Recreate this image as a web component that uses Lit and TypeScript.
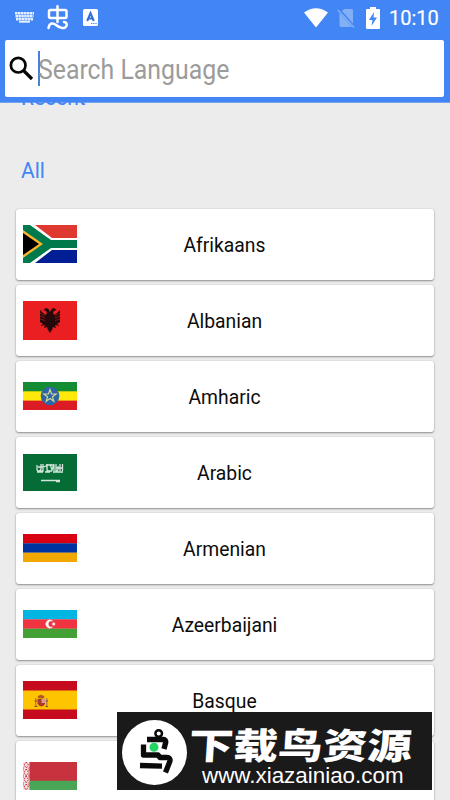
import { LitElement, html, svg, css } from "lit";
import { customElement, property } from "lit/decorators.js";

const star = (cx: number, cy: number, r: number, inner: number, n: number) => {
  const pts: string[] = [];
  for (let i = 0; i < n * 2; i++) {
    const a = (Math.PI * i) / n - Math.PI / 2;
    const q = i % 2 ? inner : r;
    pts.push(`${(cx + q * Math.cos(a)).toFixed(2)},${(cy + q * Math.sin(a)).toFixed(2)}`);
  }
  return pts.join(" ");
};

const flags: Record<string, { h: number; art: unknown }> = {
  za: {
    h: 38,
    art: svg`<rect width="54" height="38" fill="#fff"/>
      <path d="M12 0H54V13H29Z" fill="#de3831"/><path d="M12 38H54V25H29Z" fill="#001f95"/>
      <path d="M0 0H7L28 15H54V23H28L7 38H0Z" fill="#007a4d"/>
      <path d="M0 5L20 19L0 33Z" fill="#fcb52a"/><path d="M0 8L16 19L0 30Z" fill="#000"/>`,
  },
  al: {
    h: 39,
    art: svg`<rect width="54" height="39" fill="#e91f22"/>
      <path d="M27 11L25.5 8L23 7L20.5 9L23 10L24 12L22.500 14L20 12L17 9V21L20 23L17.500 25L22 24L21 27L24 26L25 29L27 32L29 29L30 26L33 27L32 24L36.500 25L34 23L37 21V9L34 12L31.500 14L30 12L31 10L33.500 9L31 7L28.500 8Z" fill="#25090a"/>
      <path d="M17 12L22 15M17 15L22 17M17 18L22 19.500M37 12L32 15M37 15L32 17M37 18L32 19.500" stroke="#a5181b" stroke-width=".7"/>`,
  },
  et: {
    h: 28,
    art: svg`<rect width="54" height="28" fill="#ffe90b"/><rect width="54" height="9.300" fill="#148c33"/>
      <rect y="18.600" width="54" height="9.400" fill="#dc1c25"/><circle cx="27" cy="14" r="9.300" fill="#2d65a9"/>
      <polygon points=${star(27, 14, 6.5, 2.6, 5)} fill="none" stroke="#d5d890" stroke-width="1.200"/>`,
  },
  sa: {
    h: 37,
    art: svg`<rect width="54" height="37" fill="#056c35"/>
      <path d="M14 11V16Q16 19 18 15V10M20 10V17H15M21 13Q25 10 24 17M24 10V17H29M27 10L29 16L31 10M31 17V11M33 10V17Q36 17 35 12M37 10V17M39.500 10V17M14 18H20M22 18H27M30 18H40M33 14H40M15 13H20M23 11H30" fill="none" stroke="#d4e6db" stroke-width="1.300"/>
      <path d="M18 26.500H37M33 27.500H37" stroke="#d4e6db" stroke-width="1.300"/>`,
  },
  am: {
    h: 28,
    art: svg`<rect width="54" height="9.500" fill="#d90012"/><rect y="9.300" width="54" height="9.500" fill="#0033a0"/><rect y="18.700" width="54" height="9.300" fill="#f2a800"/>`,
  },
  az: {
    h: 28,
    art: svg`<rect width="54" height="9.500" fill="#00b5e2"/><rect y="9.300" width="54" height="9.500" fill="#ef3340"/><rect y="18.700" width="54" height="9.300" fill="#43a035"/>
      <path d="M29.500 11A4 4 0 1 0 29.500 17A3.200 3.200 0 1 1 29.500 11Z" fill="#fff" stroke="#fff" stroke-width=".5"/><polygon points=${star(30.7, 14, 2.1, 1, 8)} fill="#fff"/>`,
  },
  es: {
    h: 38,
    art: svg`<rect width="54" height="38" fill="#c60b1e"/><rect y="9.500" width="54" height="19" fill="#ffc400"/>
      <path d="M14.500 15.500Q18 12 21.500 15.500L20.500 17.500H15.500Z" fill="#b5591f"/><path d="M14.500 18H22V23Q18.500 28 14.500 23Z" fill="#ae3825"/>
      <path d="M18.500 18H22V22H18.500Z" fill="#d79a8d"/><path d="M12.700 17V26M23.800 17V26" stroke="#ad7a51" stroke-width="1.300"/><path d="M11.500 25.500H14.500M22.300 25.500H25M11.500 20H14M22.500 20H25" stroke="#99482e" stroke-width="1"/>`,
  },
  by: {
    h: 28,
    art: svg`<rect width="54" height="28" fill="#c8313e"/><rect y="18.700" width="54" height="9.300" fill="#4aa657"/><rect width="6.500" height="28" fill="#f5dfe1"/>
      <path d="M3.200 0L5.500 3L3.200 6L1 3ZM3.200 7L5.500 10.500L3.200 14L1 10.500ZM3.200 14L5.500 17.500L3.200 21L1 17.500ZM3.200 22L5.500 25L3.200 28L1 25Z" fill="none" stroke="#c8313e" stroke-width="1" stroke-dasharray="1.500 .7"/>
      <path d="M0 5V9M6 5V9M0 12V16M6 12V16M0 20V24M6 20V24" stroke="#c8313e" stroke-width=".8"/>`,
  },
};

@customElement("language-card")
class LanguageCard extends LitElement {
  @property() name = "";
  @property() flag = "";

  static styles = css`
    :host { display: block; }
    .card {
      height: 71px; box-sizing: border-box; padding: 0 7px 1px; background: #fff; border-radius: 3px;
      display: grid; grid-template-columns: 54px 1fr 54px; align-items: center;
      box-shadow: 0 1px 2px rgba(0, 0, 0, 0.38), 0 0 2px rgba(0, 0, 0, 0.12);
    }
    svg { display: block; overflow: hidden; }
    .name { text-align: center; font: 20px/20px Roboto, sans-serif; color: #0c0c0c; padding-top: 1px; transform: translateX(-0.5px) scaleX(0.965); }
  `;

  render() {
    const f = flags[this.flag];
    return html`<div class="card">
      <svg width="54" height=${f.h} viewBox="0 0 54 ${f.h}">${f.art}</svg>
      <span class="name">${this.name}</span>
    </div>`;
  }
}

@customElement("app-root")
class AppRoot extends LitElement {
  static styles = css`
    :host { display: block; font-family: Roboto, sans-serif; }
    .screen { position: relative; width: 450px; height: 800px; overflow: hidden; background: #ececec; display: flex; flex-direction: column; }
    .top { height: 102px; flex: none; background: #4285f4; }
    .status { height: 40px; display: flex; align-items: center; padding: 0 12px 5px 15px; box-sizing: border-box; color: #fff; }
    .status svg { display: block; flex: none; }
    .worm { margin-left: 13px; }
    .input-a { margin-left: 14px; }
    .wifi { margin-left: auto; }
    .sim { margin-left: 9px; }
    .battery { margin-left: 11px; }
    .time { margin-left: 9px; font-size: 20px; line-height: 24px; width: 49px; white-space: nowrap; padding-top: 1px; -webkit-text-stroke: 0.2px #fff; }
    .search { height: 57px; margin: 0 6px 0 5px; box-sizing: border-box; padding: 0 4px; background: #fff; border-radius: 2px; display: flex; align-items: center; }
    .caret { width: 2px; height: 35px; margin-left: 4px; background: #4a80d8; }
    .placeholder { font-size: 27px; line-height: 34px; color: #9b9b9b; margin-left: -2px; padding-top: 2px; white-space: nowrap; transform: scaleX(0.92); transform-origin: left; }
    .list { flex: 1; min-height: 0; overflow: hidden; padding: 1px 16px 0; background: linear-gradient(#74a2ee 1px, #ececec 1px); }
    .label { color: #4285f4; font-size: 22px; line-height: 26px; padding-left: 5px; transform: scaleX(0.955); transform-origin: 5px; }
    .recent { margin-top: -18px; }
    .all { margin-top: 47px; }
    .cards { margin-top: 25px; display: flex; flex-direction: column; gap: 5px; }
    .mark { position: absolute; left: 117px; top: 712px; width: 315px; height: 78px; box-sizing: border-box; background: #1a1a1a; display: flex; align-items: flex-start; }
    .bird { flex: none; margin: 7.5px 0 0 5px; }
    .words { margin-left: 2px; padding-top: 12px; color: #fff; display: flex; flex-direction: column; }
    .cn { font: 900 36px/38px "Noto Sans CJK SC", sans-serif; white-space: nowrap; transform: scaleX(1.24) skewX(-3deg); transform-origin: left; width: 180px; }
    .url { font: 22.4px/24px "Liberation Sans", sans-serif; white-space: nowrap; padding: 2px 0 0 13px; }
  `;

  private languages = [
    ["Afrikaans", "za"], ["Albanian", "al"], ["Amharic", "et"], ["Arabic", "sa"],
    ["Armenian", "am"], ["Azeerbaijani", "az"], ["Basque", "es"], ["", "by"],
  ];

  render() {
    return html`<div class="screen">
      <header class="top">
        <div class="status">
          <svg width="19" height="11" viewBox="0 0 19 11" fill="none" stroke="#e4efff" stroke-width="2.500">
            <path d="M0 1.200H19" stroke-dasharray="2.500 .4"/><path d="M.5 4.200H18.500" stroke-dasharray="2.500 .4"/><path d="M1 7.200H18" stroke-dasharray="2.500 .4"/><path d="M4 9.800H15" stroke-width="1.800"/>
          </svg>
          <svg class="worm" width="22" height="25" viewBox="0 0 22 25" fill="none" stroke="#fff" stroke-width="2.500" stroke-linecap="round" stroke-linejoin="round">
            <path d="M10.500 1.300V17M3.500 5H18Q19.500 5 19.500 6.500V11.500Q19.500 13 18 13H3.500Q2 13 2 11.500V6.500Q2 5 3.500 5Z"/><path d="M1.500 23C2.500 17.500 6 17.500 9 20C13 23.500 18 24 19.500 21Q20.500 17.500 17 17"/>
          </svg>
          <svg class="input-a" width="15" height="17" viewBox="0 0 15 17"><rect width="15" height="17" rx="1.500" fill="#fff"/><path d="M4.200 12L7.500 4L10.800 12M5.300 9.500H9.700" fill="none" stroke="#2f6fd6" stroke-width="2"/><path d="M8 14.500H14" stroke="#4285f4" stroke-width="1.200" stroke-dasharray="1.300 .9"/></svg>
          <svg class="wifi" width="24" height="20" viewBox="0 0 24 20"><path d="M0 4.500Q12-4 24 4.500L12 19.500Z" fill="#fff"/></svg>
          <svg class="sim" width="18" height="20" viewBox="0 0 18 20"><path d="M7 1H15Q16 1 16 2.500V15.500L5 3ZM2.500 5L15 19H4Q2.500 19 2.500 17.500Z" fill="#83aff6"/><path d="M.8 2L17 19.500" stroke="#83aff6" stroke-width="1.500"/></svg>
          <svg class="battery" width="14" height="22" viewBox="0 0 14 22"><path d="M4 0H10V2H13Q14 2 14 3V21Q14 22 13 22H1Q0 22 0 21V3Q0 2 1 2H4Z" fill="#fff"/><path d="M8 5L3 13H6.500L5.500 19L11 10.500H7.500Z" fill="#4285f4"/></svg>
          <span class="time">10:10</span>
        </div>
        <div class="search">
          <svg width="25" height="26" viewBox="0 0 25 26" fill="none" stroke="#050505" stroke-width="2.700"><circle cx="9.200" cy="9.200" r="7.300"/><path d="M14.500 14.500L23 23" stroke-width="3.200"/></svg>
          <span class="caret"></span><span class="placeholder">Search Language</span>
        </div>
      </header>
      <main class="list">
        <div class="label recent">Recent</div>
        <div class="label all">All</div>
        <div class="cards">${this.languages.map(([n, f]) => html`<language-card name=${n} flag=${f}></language-card>`)}</div>
      </main>
      <div class="mark">
        <svg class="bird" width="65" height="65" viewBox="0 0 65 65" fill="none"><circle cx="32.500" cy="32.500" r="32.500" fill="#fff"/>
          <g stroke="#0a0a0a" stroke-width="5.300" stroke-linejoin="round"><circle cx="36.700" cy="13.500" r="3.300" stroke-width="2.500"/><path d="M25 19.500H41Q44 19.500 43.800 22L42 29"/><path d="M21.500 24.500V35H36L38 37.500H45Q48.500 37.500 48 41L43.500 52.500"/><path d="M18 45.500L40 46.200"/></g><circle cx="32" cy="27.200" r="4.500" fill="#22d563"/></svg>
        <div class="words"><span class="cn">下载鸟资源</span><span class="url">www.xiazainiao.com</span></div>
      </div>
    </div>`;
  }
}
